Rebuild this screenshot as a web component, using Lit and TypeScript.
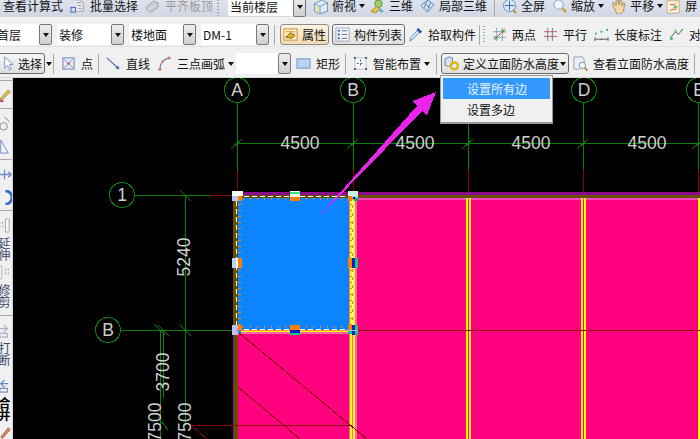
import { LitElement, html, css, svg, nothing } from 'lit';
import { customElement } from 'lit/decorators.js';

const B = '#3f66b0';
const ICONS: Record<string, unknown> = {
  batch: svg`<rect x="1" y="9" width="5" height="5" fill="none" stroke="#3f66c0"/><path d="M5 1h6l3 3v9H8" fill="#eef0f4" stroke="#9a9a9a"/><path d="M7 4h5M8 7h4M9 10h3" stroke="#888"/>`,
  flush: svg`<path d="M2 8l7-6 5 2v5l-7 5-5-2z" fill="#c8ccd0" stroke="#a0a4a8"/><path d="M3 12l8-6" stroke="#e8e8e8"/>`,
  cube: svg`<path d="M2 5l8-4 6 3v9l-8 3-6-3z" fill="#dfeaf6" stroke="#6f8fb5"/><path d="M2 5l6 3v8M8 8l8-4" fill="none" stroke="#6f8fb5"/><path d="M3 7l4 2v5l-4-2z" fill="#f0e0a0"/>`,
  view3d: svg`<circle cx="9" cy="5" r="4" fill="#9bd06a" stroke="#5e9a40"/><path d="M1 13l6-5 4 3-5 4z" fill="#e8c848" stroke="#a08828"/><path d="M10 9l5 4-3 2-3-3z" fill="#7aa8d8"/>`,
  part3d: svg`<path d="M1 7l7-6 7 5-7 8z" fill="#d2e4f6" stroke="#5c86b8"/><path d="M4 4.5l7 5M8 1.5l-4 9M11.5 3.5l-4 9" stroke="#5c86b8" fill="none"/>`,
  full: svg`<circle cx="8" cy="7" r="6.5" fill="#dbe8f6" stroke="#6a8cb4"/><path d="M8 2v10M3 7h10" stroke="#2f66b8"/><path d="M12 12l3 3" stroke="#b09040" stroke-width="2"/>`,
  zoom: svg`<circle cx="7" cy="6" r="5" fill="#edf4fb" stroke="#7f9cc0"/><path d="M11 10l4 4" stroke="#c9a030" stroke-width="2.4"/>`,
  hand: svg`<path d="M3 8l-1-4 2 0 2 3 0-6 2 0 1 5 1-5 2 1 0 5 2-3 1 1-1 8-3 3h-4z" fill="#efd9a6" stroke="#a58a55"/>`,
  refresh: svg`<rect x="1" y="2" width="13" height="13" fill="#fbf6e8" stroke="#c8a868"/><path d="M4 6h5l2-2M11 11H6l-2 2" fill="none" stroke="#e05030"/><rect x="8" y="7" width="4" height="3" fill="#70c060"/>`,
  attr: svg`<rect x="1" y="2" width="14" height="12" fill="#fbf0c8" stroke="#d08a30"/><path d="M3 11l5-5 5 3-4 3z" fill="#e0b020" stroke="#7a6020"/><path d="M3 5h10" stroke="#e09040"/>`,
  list: svg`<rect x="1" y="1" width="14" height="14" fill="#f4f6fa" stroke="#9aa8bc"/><path d="M3 4h2M3 8h2M3 12h2" stroke="#2a60b0" stroke-width="2"/><path d="M7 4h6M7 8h6M7 12h6" stroke="#606878"/>`,
  dropper: svg`<path d="M2 15l1-4 7-7 2 2-7 7z" fill="#dbe8f8" stroke="#5f8ac0"/><path d="M10 2l4 4" stroke="#2a5c9c" stroke-width="3"/>`,
  two: svg`<path d="M1 5h14M1 11h14M5 1v14M11 1v14" stroke="#8c9cb8"/><path d="M2 14L14 2" stroke="#d83020"/><rect x="10" y="3" width="3" height="3" fill="#40b050"/><rect x="3" y="10" width="3" height="3" fill="#40b050"/>`,
  parallel: svg`<path d="M1 5h14M1 10h14" stroke="#d05050"/><path d="M5 1v14M10 1v14" stroke="#6a78a8"/>`,
  length: svg`<path d="M1 13h14M1 11v4M15 11v4M8 12v2" stroke="#555"/><rect x="1" y="6" width="2" height="2" fill="#40b050"/><rect x="7" y="4" width="2" height="2" fill="#40b050"/><rect x="13" y="2" width="2" height="2" fill="#40b050"/>`,
  pair: svg`<path d="M2 11l5-6 3 3 4-5" fill="none" stroke="#555"/><rect x="1" y="11" width="3" height="3" fill="#50c060"/><rect x="6" y="3" width="2" height="2" fill="#50c060"/><rect x="13" y="2" width="2" height="2" fill="#50c060"/>`,
  cursor: svg`<path d="M4 1v12l3-3 2 5 2-1-2-5h4z" fill="#fff" stroke="#7a90c0"/>`,
  point: svg`<rect x="2" y="2" width="12" height="12" fill="#e2e8f4" stroke="#6c80b4"/><path d="M3 3l10 10M13 3L3 13" stroke="#8c9cc4"/><rect x="7" y="7" width="2" height="2" fill="#e02020"/>`,
  line: svg`<path d="M1 2l13 12" stroke="${B}" stroke-width="1.2"/><path d="M14 14l-4-1 3-3z" fill="${B}"/>`,
  arc: svg`<path d="M3 14C3 8 7 3 13 2" fill="none" stroke="#5078b8" stroke-width="1.2"/><circle cx="3" cy="14" r="1.6" fill="#e07060"/><circle cx="6" cy="6" r="1.3" fill="#e07060"/><circle cx="13" cy="2" r="1.6" fill="#e07060"/>`,
  rect: svg`<rect x="1" y="3" width="14" height="10" fill="#bcd2f0" stroke="#6f90c8"/>`,
  smart: svg`<rect x="2" y="2" width="12" height="12" fill="#f4f6fa" stroke="#9aa8bc" stroke-dasharray="2 1"/><path d="M8 4v8M4 8h8" stroke="#505868" stroke-dasharray="2 2"/><path d="M1 1h2v2H1zM13 1h2v2h-2zM1 13h2v2H1zM13 13h2v2h-2z" fill="#404858"/>`,
  define: svg`<path d="M1 3l4-2 4 1v7l-4 2-4-1z" fill="#d6e2f4" stroke="#6a84b0"/><circle cx="11" cy="10.5" r="3.8" fill="none" stroke="#d8b810" stroke-width="2.4"/>`,
  look: svg`<path d="M1 1h9l2 3v3M1 1v13h6" fill="#eef2f8" stroke="#8c9cb8"/><circle cx="10" cy="10" r="3.4" fill="#f8fbff" stroke="#7088a8"/><path d="M12.5 12.5l3 3" stroke="#b89030" stroke-width="2"/>`,
  pencil: svg`<path d="M3 12L12 2l2 2-9 9z" fill="#e8c850" stroke="#9a8030"/><path d="M2 14h5" stroke="#d04090" stroke-width="2"/>`,
  offset: svg`<path d="M8 1l5 5" stroke="#5078b0"/><circle cx="7" cy="11" r="4" fill="none" stroke="#808890"/>`,
  tri: svg`<path d="M4 1l8 14H4z" fill="#f0f4fa" stroke="#6c8cc4"/>`,
  move: svg`<path d="M1 8h14M8 3v10M12 5l3 3-3 3" fill="none" stroke="#6c8cc4" stroke-width="1.4"/>`,
  rotate: svg`<path d="M9 1a7 7 0 0 1 0 14" fill="none" stroke="#3070d0" stroke-width="3"/>`,
  ext: svg`<path d="M9 1h4v14H9z" fill="#f6f6f6" stroke="#a8a8a8"/><path d="M3 4v2M3 8v2M6 4v2M6 8v2" stroke="#999"/>`,
  trim: svg`<path d="M2 1h3v14H2z" fill="#f6f6f6" stroke="#b8b8b8"/><path d="M9 4v2M9 8v2M12 4v2M12 8v2" stroke="#999"/>`,
  brk: svg`<path d="M3 6h8M7 2l4 4-4 4" fill="none" stroke="#aab4c8" stroke-width="1.4"/><rect x="3" y="11" width="8" height="4" fill="none" stroke="#98a0b0"/>`,
  join: svg`<path d="M12 6H4M8 2L4 6l4 4" fill="none" stroke="#5c88d0" stroke-width="1.4"/><rect x="3" y="11" width="8" height="4" fill="none" stroke="#5878a8"/>`,
  brush: svg`<path d="M4 13L12 3l2 2-8 9z" fill="#e88860" stroke="#a06040"/>`,
};

const icon = (name: string, cls = '') => html`<svg class="ic ${cls}" viewBox="0 0 16 16">${ICONS[name]}</svg>`;

const GREEN = '#0a800a';
const RED = '#8a0000';
const GRID_X = [237, 353, 468, 583, 698];
const AXES = [
  { x: 237, y: 90, t: 'A' },
  { x: 353, y: 90, t: 'B' },
  { x: 584, y: 90, t: 'D' },
  { x: 699, y: 90, t: 'E' },
  { x: 122, y: 195, t: '1' },
  { x: 108, y: 330, t: 'B' },
];
const WIDTHS = [300, 415, 531, 647];

// selection grips: x, y, w, h, colour
const GRIPS: [number, number, number, number, string][] = [
  [232, 191, 11, 5, '#f4fff4'], [232, 196, 6, 5, '#b4c4f4'], [238, 196, 4, 5, '#ff8000'],
  [290, 191, 10, 1, '#e8ffe8'], [290, 192, 10, 2, '#40e080'], [290, 194, 10, 3, '#e8f8f0'], [290, 197, 10, 4, '#ff8000'],
  [348, 191, 10, 5, '#c8f4e0'], [348, 196, 4, 5, '#ff8000'], [352, 196, 6, 2, '#a0d0e0'], [354, 198, 4, 3, '#00b050'], [353, 197, 2, 2, '#0000c0'],
  [232, 258, 6, 10, '#c4d0f4'], [236, 258, 2, 10, '#fff'], [238, 258, 4, 10, '#ff8000'],
  [348, 258, 4, 10, '#ff8000'], [352, 258, 3, 10, '#0020c0'], [355, 258, 3, 10, '#10d080'],
  [232, 325, 6, 10, '#b8c4f0'], [236, 328, 3, 4, '#ff80ff'], [238, 325, 4, 5, '#ff8000'], [238, 330, 3, 3, '#00a0e0'],
  [290, 325, 10, 5, '#ff8000'], [290, 330, 10, 3, '#0020c0'], [290, 333, 10, 2, '#10d080'],
  [348, 325, 4, 5, '#ff8000'], [352, 325, 3, 10, '#0020c0'], [355, 325, 3, 10, '#10d080'], [348, 330, 4, 4, '#10c0a0'], [348, 330, 10, 1, '#80d0ff'],
];

const range = (from: number, to: number, step: number) => {
  const out: number[] = [];
  for (let v = from; v <= to; v += step) out.push(v);
  return out;
};

@customElement('app-root')
export class AppRoot extends LitElement {
  static styles = css`
    :host {
      position: relative;
      width: 700px;
      height: 439px;
      overflow: hidden;
      display: flex;
      flex-direction: column;
      font: 12px/16px 'Noto Sans CJK SC', 'Liberation Sans', sans-serif;
      color: #111;
      background: #f0f0f0;
    }
    .row {
      display: flex;
      flex: none;
      align-items: center;
      gap: 7px;
      white-space: nowrap;
      overflow: hidden;
    }
    .row1 {
      height: 17px;
      align-items: flex-end;
      padding-left: 3px;
      background: linear-gradient(#dfe3ee, #d2d7e4);
      border-bottom: 1px solid #f4f4f4;
    }
    .row1 > * { margin-bottom: 3px; }
    .row1 > .combo { margin-bottom: 1px; }
    .row1 > .sep, .row1 > .grip { margin-bottom: 0; }
    .row2 {
      box-sizing: border-box;
      height: 29px;
      gap: 3px;
      padding-top: 5px;
      border-bottom: 1px solid #e2e2e2;
    }
    .row2 .combo { margin-right: 2px; }
    .row3 {
      box-sizing: border-box;
      height: 31px;
      padding-top: 3px;
      border-bottom: 1px solid #d8d8d8;
    }
    .group { display: flex; flex: none; align-items: center; gap: 7px; margin-left: 4px; }
    .tool { display: flex; flex: none; align-items: center; gap: 5px; }
    .tool .caret { margin-left: -2px; }
    .tight { gap: 4px; }
    .tight .caret { margin-left: -1px; }
    .big { gap: 3px; }
    .big .caret { margin-left: 0; }
    .big .ic { width: 18px; }
    .grey { color: #9a9a9a; }
    .ic { display: block; flex: none; width: 15px; height: 15px; }
    .caret {
      flex: none;
      width: 0;
      height: 0;
      border: 3.5px solid transparent;
      border-top: 4px solid #111;
      border-bottom: 0;
    }
    .sep { flex: none; width: 1px; height: 20px; background: #a8a8a8; }
    .grip {
      flex: none;
      width: 2px;
      height: 17px;
      background: repeating-linear-gradient(#a4a8b4 0 1px, transparent 1px 3px);
    }
    .pull1 { margin-left: -1px; }
    .pull2 { margin-left: -2px; }
    .pull3 { margin-left: -3px; }
    .pull4 { margin-left: -4px; }
    .pull6 { margin-left: -6px; }
    .combo {
      display: flex;
      flex: none;
      align-items: center;
      justify-content: space-between;
      box-sizing: border-box;
      height: 21px;
      padding-left: 2px;
      background: #fff;
    }
    .combo i {
      display: flex;
      align-items: center;
      justify-content: center;
      box-sizing: border-box;
      width: 13px;
      height: 21px;
      border: 1px solid #777;
      border-radius: 2px;
      background: linear-gradient(#eee, #cfcfcf);
    }
    .w52 { width: 57px; margin-left: -5px; }
    .w67 { width: 67px; }
    .w68 { width: 68px; }
    .w78 { width: 78px; margin-left: 2px; height: 19px; }
    .w55 { width: 55px; margin-left: -5px; }
    .btn {
      display: flex;
      flex: none;
      align-items: center;
      gap: 4px;
      box-sizing: border-box;
      height: 21px;
      padding: 0 2px;
      border: 1px solid #6c6c6c;
      border-radius: 3px;
      background: linear-gradient(#f6f6f6, #dfdfdf);
    }
    .btn .caret { margin-left: -3px; }
    .on { margin-left: 2px; border-color: #8d8d8d; background: linear-gradient(#fdf4e4, #f2d9b4); }
    .pick { margin-left: -2px; gap: 2px; }
    .main { display: flex; flex: 1; min-height: 0; }
    .rail {
      display: flex;
      flex: none;
      flex-direction: column;
      align-items: flex-start;
      box-sizing: border-box;
      width: 13px;
      padding-top: 2px;
      overflow: hidden;
      border-right: 1px solid #d4d4d4;
      background: #f0f0f0;
    }
    .rail .ic { margin: 4px 0 4px -3px; }
    .rail .lead { margin-top: 6px; }
    .rail .drop { margin-top: 12px; }
    .rail .dots { flex: none; width: 100%; height: 2px; }
    .rail hr {
      flex: none;
      width: 100%;
      height: 1px;
      margin: 1px 0 3px;
      border: 0;
      background: #a8a8a8;
    }
    .rail span {
      flex: none;
      margin-left: -3px;
      writing-mode: vertical-rl;
      line-height: 14px;
      color: #3a4a6a;
    }
    .rail .end { margin-bottom: 6px; }
    .rail .dark { color: #000; font-weight: 700; }
    .canvas { flex: 1; min-width: 0; background: #000; }
    .canvas svg { display: block; }
    .canvas text {
      font: 17.5px 'Liberation Sans', sans-serif;
      fill: #cfcfcf;
      text-anchor: middle;
      dominant-baseline: central;
    }
    .menu {
      position: absolute;
      left: 440px;
      top: 75px;
      box-sizing: border-box;
      width: 113px;
      padding: 2px;
      border: 1px solid #9a9a9a;
      border-bottom-width: 2px;
      background: #f0f0f0;
    }
    .menu div { height: 21px; padding-left: 24px; line-height: 21px; }
    .menu .hot { background: #3399ff; color: #eaf4ff; }
  `;

  private _tool(name: string | null, label: string, cls = '', caret = false) {
    return html`<div class="tool ${cls}">
      ${name ? icon(name) : nothing}<span>${label}</span>${caret ? html`<b class="caret"></b>` : nothing}
    </div>`;
  }

  private _combo(cls: string, label: string) {
    return html`<div class="combo ${cls}"><span>${label}</span><i><b class="caret"></b></i></div>`;
  }

  private _canvas() {
    return html`<svg width="687" height="361" viewBox="13 78 687 361" shape-rendering="crispEdges">
      <rect x="238" y="198" width="462" height="241" fill="#ff007f"></rect>
      <rect x="238" y="196" width="115" height="135" fill="#0a84ff"></rect>

      <!-- walls -->
      <rect x="233" y="192" width="467" height="3" fill="#8b0a8b"></rect>
      <rect x="233" y="195" width="467" height="3" fill="#665000"></rect>
      <rect x="354" y="198" width="346" height="2" fill="#ff44c4"></rect>
      <rect x="233" y="196" width="5" height="243" fill="#665000"></rect>
      <rect x="233" y="332" width="1" height="107" fill="#8b0a8b"></rect>
      <rect x="238" y="330" width="112" height="1" fill="#ff9a40"></rect>
      <rect x="238" y="331" width="112" height="1" fill="#ffff00"></rect>
      <rect x="238" y="332" width="112" height="2" fill="#ff66b0"></rect>
      <rect x="349" y="198" width="8" height="241" fill="#ff66b0"></rect>
      <rect x="350" y="198" width="2" height="241" fill="#ffff00"></rect>
      <rect x="353" y="198" width="2" height="241" fill="#ffff00"></rect>
      ${[466, 581].map(
        (x) => svg`<rect x=${x} y="198" width="2" height="241" fill="#ffff00"></rect>
          <rect x=${x + 3} y="198" width="2" height="241" fill="#ffff00"></rect>`,
      )}
      <rect x="698" y="198" width="2" height="241" fill="#ffff00"></rect>

      <!-- column grid and dimensions -->
      ${GRID_X.map(
        (x) => svg`<path d="M${x} 102V170M${x - 6} 149L${x + 5} 139" stroke=${GREEN} fill="none"></path>
          <path d="M${x} 170V192" stroke=${RED}></path>`,
      )}
      <path d="M237 143H700" stroke=${GREEN}></path>
      <path d="M135 195H210M120 330H233M185 195V426M160 330V439M163 330V398" stroke=${GREEN} fill="none"></path>
      <path d="M210 195H233M358 330.5H700" stroke=${RED}></path>
      <path d="M180 190L191 201M180 325L191 336M154 324L165 335M158 325L169 336M158 417L168 430" stroke=${GREEN}></path>
      <path d="M238 332L367 439M238 387L300 439M192 426L207 439M191 425.5H352" stroke=${RED} fill="none"></path>

      ${AXES.map(
        (a) => svg`<circle cx=${a.x} cy=${a.y} r="12.5" fill="#000" stroke=${GREEN}></circle>
          <text x=${a.x} y=${a.y}>${a.t}</text>`,
      )}
      ${WIDTHS.map((x) => svg`<text x=${x} y="143">4500</text>`)}
      <text transform="translate(184 257) rotate(-90)">5240</text>
      <text transform="translate(163 372) rotate(-90)">3700</text>
      <text transform="translate(155 422) rotate(-90)">7500</text>
      <text transform="translate(185 422) rotate(-90)">7500</text>

      <!-- selected cell outline -->
      <rect x="236" y="196" width="116" height="133" fill="none" stroke="#fff" stroke-dasharray="5 3"></rect>
      ${range(204, 324, 6).map(
        (y) => svg`<path d="M238 ${y}h3M349 ${y}h3" stroke="#ff8000"></path>`,
      )}
      ${range(243, 348, 7).map(
        (x) => svg`<path d="M${x} 198v2M${x} 326v2" stroke="#ff8000"></path>`,
      )}
      ${GRIPS.map(
        ([x, y, w, h, c]) => svg`<rect x=${x} y=${y} width=${w} height=${h} fill=${c}></rect>`,
      )}

      <polygon points="313,223 417,106 413,101 436,92 427,115 422,111" fill="#ee22ee"></polygon>
    </svg>`;
  }

  render() {
    return html`
      <div class="row row1">
        ${this._tool(null, '查看计算式')}
        ${this._tool('batch', '批量选择')}
        ${this._tool('flush', '平齐板顶', 'grey')}
        <div class="grip pull3"></div>
        ${this._combo('w78', '当前楼层')}
        ${this._tool('cube', '俯视', 'big pull2', true)}
        ${this._tool('view3d', '三维', 'tight pull2')}
        ${this._tool('part3d', '局部三维', 'tight')}
        <div class="sep"></div>
        ${this._tool('full', '全屏', 'tight')}
        ${this._tool('zoom', '缩放', 'tight', true)}
        ${this._tool('hand', '平移', 'big pull2', true)}
        ${this._tool('refresh', '屏', 'tight pull4')}
      </div>
      <div class="row row2">
        ${this._combo('w52', '首层')}
        ${this._combo('w67', '装修')}
        ${this._combo('w67', '楼地面')}
        ${this._combo('w68', 'DM-1')}
        <div class="sep"></div>
        <div class="btn on">${icon('attr')}<span>属性</span></div>
        <div class="btn">${icon('list')}<span>构件列表</span></div>
        ${this._tool('dropper', '拾取构件')}
        <div class="sep"></div>
        <div class="grip"></div>
        <div class="group">
          ${this._tool('two', '两点')}
          ${this._tool('parallel', '平行')}
          ${this._tool('length', '长度标注')}
          ${this._tool('pair', '对')}
        </div>
      </div>
      <div class="row row3">
        <div class="btn pick">${icon('cursor')}<span>选择</span></div>
        <b class="caret pull6"></b>
        <div class="sep pull6"></div>
        ${this._tool('point', '点')}
        <div class="sep pull2"></div>
        ${this._tool('line', '直线')}
        ${this._tool('arc', '三点画弧', '', true)}
        ${this._combo('w55', '')}
        ${this._tool('rect', '矩形', 'pull2')}
        <div class="sep pull2"></div>
        ${this._tool('smart', '智能布置', '', true)}
        <div class="sep pull1"></div>
        <div class="btn pull3">${icon('define')}<span>定义立面防水高度</span><b class="caret"></b></div>
        ${this._tool('look', '查看立面防水高度', 'pull3')}
        <div class="sep pull2"></div>
      </div>
      <div class="main">
        <div class="rail">
          <div class="grip dots"></div>
          ${icon('pencil', 'lead')}
          <hr />
          ${icon('offset')} ${icon('tri')}
          <hr />
          ${icon('move')} ${icon('rotate')}
          <hr />
          ${icon('ext')}
          <span>延伸</span>
          ${icon('trim')}
          <span class="end">修剪</span>
          <hr />
          ${icon('brk')}
          <span>打断</span>
          ${icon('join', 'drop')}
          <span class="dark">合并</span>
          ${icon('brush')}
        </div>
        <div class="canvas">${this._canvas()}</div>
      </div>
      <div class="menu">
        <div class="hot">设置所有边</div>
        <div>设置多边</div>
      </div>
    `;
  }
}
